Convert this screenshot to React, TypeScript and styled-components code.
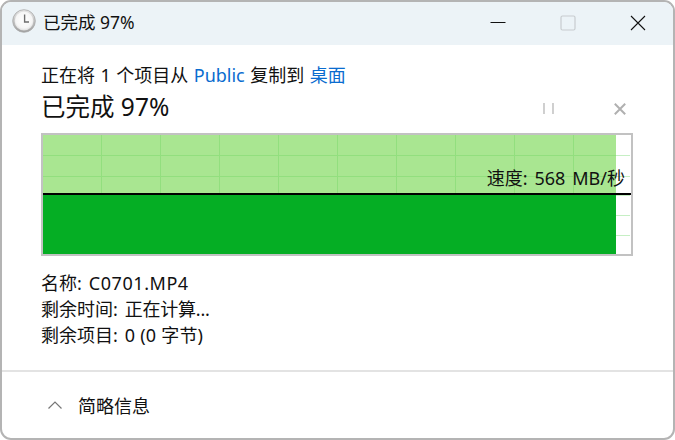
import React from 'react'
import styled, { createGlobalStyle } from 'styled-components'

const Global = createGlobalStyle`
  html, body {
    margin: 0;
    padding: 0;
    width: 675px;
    height: 440px;
    overflow: hidden;
    background: #fff;
  }
  body {
    font-family: "Noto Sans", "Noto Sans CJK SC", sans-serif;
    color: #111;
  }
`

const Window = styled.div`
  box-sizing: border-box;
  width: 675px;
  height: 440px;
  border: 2px solid #b4b4b4;
  border-radius: 11px;
  background: #fff;
  overflow: hidden;
  display: flex;
  flex-direction: column;
`

const TitleBar = styled.div`
  height: 43px;
  flex: none;
  background: #ecf3f7;
  display: flex;
  align-items: center;
  padding-left: 10px;
`

const ClockSlot = styled.div`
  display: flex;
  padding-bottom: 5px;
`

const TitleText = styled.div`
  margin-left: 7px;
  padding-bottom: 4px;
  font-size: 17.5px;
  flex: 1;
  line-height: 20px;
`

const WinButton = styled.div`
  width: 70px;
  height: 41px;
  padding-bottom: 2px;
  display: flex;
  align-items: center;
  justify-content: center;
`

const Body = styled.div`
  flex: 1;
  padding: 18px 40px 0 39px;
  display: flex;
  flex-direction: column;
`

const Line = styled.div`
  font-size: 18px;
  line-height: 24px;
  white-space: pre;
  word-spacing: 0.8px;
`

const Link = styled.span`
  color: #0a6ccf;
`

const HeadRow = styled.div`
  display: flex;
  align-items: center;
  height: 30px;
  margin-top: 3px;
  margin-bottom: 13px;
`

const Heading = styled.div`
  flex: 1;
  padding-top: 4px;
  font-size: 24.5px;
  line-height: 30px;
`

const SmallButton = styled.div<{ $width: number }>`
  width: ${p => p.$width}px;
  padding-top: 7px;
  display: flex;
  justify-content: center;
`

const Chart = styled.div`
  position: relative;
  box-sizing: border-box;
  width: 592px;
  height: 123px;
  border: 2px solid #c2c2c2;
  display: flex;
  flex-direction: column;
  background: #fff;
`

const Upper = styled.div`
  height: 58px;
  flex: none;
  background-image: repeating-linear-gradient(
    to bottom,
    transparent 0,
    transparent 20px,
    #c6efc4 20px,
    #c6efc4 21px
  );
  background-size: calc(100% - 1px) 100%;
  background-repeat: no-repeat;
`

const Fill = styled.div<{ $pct: number }>`
  width: ${p => p.$pct}%;
  height: 100%;
`

const UpperFill = styled(Fill)`
  background-color: #a9e691;
  background-image:
    repeating-linear-gradient(
      to right,
      transparent 0,
      transparent 58px,
      #92df7e 58px,
      #92df7e 59px
    ),
    repeating-linear-gradient(
      to bottom,
      transparent 0,
      transparent 20px,
      #92df7e 20px,
      #92df7e 21px
    );
`

const SpeedLine = styled.div`
  height: 1px;
  flex: none;
  background: #000;
  border-bottom: 1px solid rgba(0, 0, 0, 0.3);
`

const Lower = styled.div`
  flex: 1;
  background-image: repeating-linear-gradient(
    to bottom,
    #c6efc4 0,
    #c6efc4 1px,
    transparent 1px,
    transparent 20px
  );
  background-size: calc(100% - 1px) 100%;
  background-repeat: no-repeat;
`

const LowerFill = styled(Fill)`
  background: #05ae24;
`

const Speed = styled.div`
  position: absolute;
  right: 6px;
  top: 31px;
  font-size: 18px;
  line-height: 24px;
  word-spacing: 2.2px;
`

const Details = styled.div`
  margin-top: 14px;
  display: flex;
  flex-direction: column;
`

const DetailLine = styled.div`
  font-size: 18px;
  line-height: 26px;
  white-space: pre;
`

const DetailLabel = styled.span`
  margin-right: 7px;
`

const DetailValue = styled.span<{ $spacing: number }>`
  letter-spacing: ${p => p.$spacing}px;
`

const Footer = styled.div`
  margin-top: auto;
  height: 66px;
  flex: none;
  border-top: 2px solid #e3e3e3;
  display: flex;
  align-items: center;
  padding-left: 46px;
  font-size: 18px;
`

const Toggle = styled.span`
  margin-left: 16px;
`

const ClockIcon = () => (
  <svg width="24" height="24" viewBox="0 0 24 24">
    <defs>
      <linearGradient id="rim" x1="0" y1="0" x2="0" y2="1">
        <stop offset="0" stopColor="#e8e8e8" />
        <stop offset="1" stopColor="#a0a0a0" />
      </linearGradient>
      <radialGradient id="face" cx="0.5" cy="0.45" r="0.6">
        <stop offset="0" stopColor="#ffffff" />
        <stop offset="0.7" stopColor="#f6f6f6" />
        <stop offset="1" stopColor="#d8d8d8" />
      </radialGradient>
    </defs>
    <circle cx="12" cy="12" r="11.3" fill="url(#rim)" stroke="#a8a8a8" strokeWidth="0.8" />
    <circle cx="12" cy="12" r="9.4" fill="url(#face)" />
    <path d="M12.6 5.5V13H17" fill="none" stroke="#6e6e6e" strokeWidth="1.4" />
  </svg>
)

const MinimizeIcon = () => (
  <svg width="16" height="16" viewBox="0 0 16 16">
    <path d="M0.5 7.5H15.5" stroke="#111" strokeWidth="1" />
  </svg>
)

const MaximizeIcon = () => (
  <svg width="16" height="16" viewBox="0 0 16 16">
    <rect x="1" y="1" width="14" height="14" rx="1.5" fill="none" stroke="#c8cccf" strokeWidth="1.2" />
  </svg>
)

const CloseIcon = () => (
  <svg width="16" height="16" viewBox="0 0 16 16">
    <path d="M1 1L15 15M15 1L1 15" stroke="#111" strokeWidth="1.1" fill="none" />
  </svg>
)

const PauseIcon = () => (
  <svg width="11" height="11" viewBox="0 0 11 11">
    <path d="M1 0V11M10 0V11" stroke="#c4c4c4" strokeWidth="1.6" />
  </svg>
)

const StopIcon = () => (
  <svg width="12" height="12" viewBox="0 0 12 12">
    <path d="M0.8 0.8L11.2 11.2M11.2 0.8L0.8 11.2" stroke="#b0b0b0" strokeWidth="2" />
  </svg>
)

const ChevronUp = () => (
  <svg width="14" height="8" viewBox="0 0 14 8">
    <path d="M0.5 7.5L7 1L13.5 7.5" fill="none" stroke="#777" strokeWidth="1.2" />
  </svg>
)

export default function App() {
  const progress = 97.5

  return (
    <>
      <Global />
      <Window>
        <TitleBar>
          <ClockSlot><ClockIcon /></ClockSlot>
          <TitleText>已完成 97%</TitleText>
          <WinButton><MinimizeIcon /></WinButton>
          <WinButton><MaximizeIcon /></WinButton>
          <WinButton><CloseIcon /></WinButton>
        </TitleBar>
        <Body>
          <Line>
            正在将 1 个项目从 <Link>Public</Link> 复制到 <Link>桌面</Link>
          </Line>
          <HeadRow>
            <Heading>已完成 97%</Heading>
            <SmallButton $width={118}><PauseIcon /></SmallButton>
            <SmallButton $width={26}><StopIcon /></SmallButton>
          </HeadRow>
          <Chart>
            <Upper>
              <UpperFill $pct={progress} />
            </Upper>
            <SpeedLine />
            <Lower>
              <LowerFill $pct={progress} />
            </Lower>
            <Speed>速度: 568 MB/秒</Speed>
          </Chart>
          <Details>
            <DetailLine><DetailLabel>名称:</DetailLabel><DetailValue $spacing={0.55}>C0701.MP4</DetailValue></DetailLine>
            <DetailLine><DetailLabel>剩余时间:</DetailLabel><DetailValue $spacing={-0.25}>正在计算...</DetailValue></DetailLine>
            <DetailLine><DetailLabel>剩余项目:</DetailLabel><DetailValue $spacing={0.2}>0 (0 字节)</DetailValue></DetailLine>
          </Details>
        </Body>
        <Footer>
          <ChevronUp />
          <Toggle>简略信息</Toggle>
        </Footer>
      </Window>
    </>
  )
}
